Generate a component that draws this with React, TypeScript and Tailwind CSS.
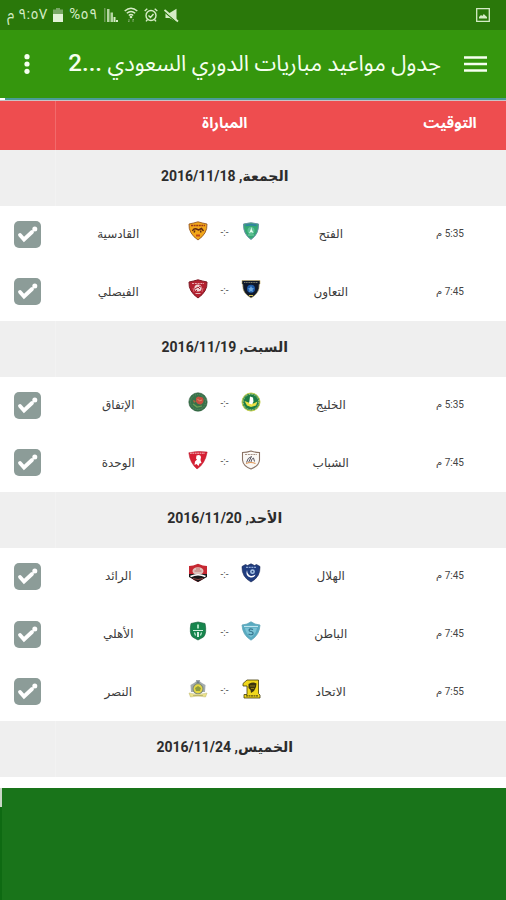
import { useState } from "react";
import type { ReactNode } from "react";

type CrestName =
  | "qadsiah" | "fateh" | "faisaly" | "taawoun" | "ettifaq" | "khaleej" | "wehda"
  | "shabab" | "raed" | "hilal" | "ahli" | "batin" | "nassr" | "ittihad";

type Match = { time: string; home: string; away: string; homeCrest: CrestName; awayCrest: CrestName };
type Day = { name: string; date: string; matches: Match[] };

const days: Day[] = [
  {
    name: "الجمعة", date: "2016/11/18",
    matches: [
      { time: "5:35", home: "الفتح", away: "القادسية", homeCrest: "fateh", awayCrest: "qadsiah" },
      { time: "7:45", home: "التعاون", away: "الفيصلي", homeCrest: "taawoun", awayCrest: "faisaly" },
    ],
  },
  {
    name: "السبت", date: "2016/11/19",
    matches: [
      { time: "5:35", home: "الخليج", away: "الإتفاق", homeCrest: "khaleej", awayCrest: "ettifaq" },
      { time: "7:45", home: "الشباب", away: "الوحدة", homeCrest: "shabab", awayCrest: "wehda" },
    ],
  },
  {
    name: "الأحد", date: "2016/11/20",
    matches: [
      { time: "7:45", home: "الهلال", away: "الرائد", homeCrest: "hilal", awayCrest: "raed" },
      { time: "7:45", home: "الباطن", away: "الأهلي", homeCrest: "batin", awayCrest: "ahli" },
      { time: "7:55", home: "الاتحاد", away: "النصر", homeCrest: "ittihad", awayCrest: "nassr" },
    ],
  },
  { name: "الخميس", date: "2016/11/24", matches: [] },
];

const wideShield = "M1 3 Q6 2 10 .8 Q14 2 19 3 Q19.6 12.5 10 19 Q.4 12.5 1 3Z";

const crests: Record<CrestName, ReactNode> = {
  qadsiah: (
    <>
      <path d={wideShield} fill="#f2a71a" stroke="#8a4a1c" strokeWidth=".8" />
      <path d="M3 4.500h14" stroke="#9c3a18" strokeWidth="1.500" strokeDasharray="2 .6" />
      <path d="M4.500 10q1-3 4-2l2 1 3-1.500 2 2.500M7 9.500l-1 2M12.500 9.500l.5 2" stroke="#5d2713" strokeWidth="1.400" fill="none" />
      <path d="M8 14.500h4" stroke="#c2461a" strokeWidth="2" />
    </>
  ),
  fateh: (
    <>
      <path d="M2.500 3 Q10 .5 17.500 3 Q18 13 10 18.500 Q2 13 2.500 3Z" fill="#35a873" stroke="#6a92a8" strokeWidth="1" />
      <path d="M4.500 4.500q5.500-1.500 11 0" stroke="#2f7ea8" strokeWidth="1.500" fill="none" />
      <circle cx="10" cy="9.500" r="3.500" fill="#5fc096" />
      <path d="M10.500 6l.3 2.500 1.700 3.500-2.500-1-2 1.500 1.500-3.500z" fill="#e6fff2" />
      <path d="M7 14h6" stroke="#7fd0ac" strokeWidth="1" />
    </>
  ),
  faisaly: (
    <>
      <path d={wideShield} fill="#b3202f" stroke="#7c1a25" strokeWidth="1" />
      <path d="M4 4.500h12" stroke="#e9a9ae" strokeWidth="1" strokeDasharray="2 .8" />
      <circle cx="10" cy="9" r="3.600" fill="#eed3d4" />
      <path d="M7 10l3-2 2 2M11 7l2 1M8 12l1-1" fill="none" stroke="#a31e2c" strokeWidth="1" />
      <path d="M5 9l1 4M15 9l-1 4" stroke="#da7a83" strokeWidth=".8" />
      <path d="M7.500 14.500h5" stroke="#e4b5b8" strokeWidth="1" />
    </>
  ),
  taawoun: (
    <>
      <path d="M1 1.500h18v3.200l-.8 1Q19 14 10 19 Q1 14 1.800 5.700L1 4.700Z" fill="#10192b" stroke="#c9b26a" strokeWidth=".6" />
      <path d="M3 3.500h14" stroke="#97977a" strokeWidth=".8" strokeDasharray="1.200 .5" />
      <circle cx="10" cy="9.800" r="4" fill="#1f5ca8" />
      <path d="M10 7l1 2 2 .4-1.500 1.400.4 2.200-1.900-1-1.900 1 .4-2.200L7 9.400 9 9z" fill="#6fa9de" />
      <path d="M8 16.500h4" stroke="#d4c050" strokeWidth="1" />
    </>
  ),
  ettifaq: (
    <>
      <circle cx="10" cy="10" r="9.200" fill="#39724a" stroke="#2b5a3a" strokeWidth=".6" />
      <circle cx="10" cy="10" r="7.500" fill="none" stroke="#5c9169" strokeWidth=".9" strokeDasharray="1 1" />
      <path d="M8 6q2-2.500 4-1 3-.5 3.500 2 .5 4-2.500 5.500-4 0-5-3z" fill="#c9503f" />
      <path d="M5 8l3 1-2 2" fill="#b5603f" />
      <path d="M9.500 7l2 2 2.500-1" stroke="#efaa8e" strokeWidth=".7" fill="none" />
      <path d="M5 12l4 3 5-1" stroke="#6fa256" strokeWidth="1.200" fill="none" />
    </>
  ),
  khaleej: (
    <>
      <circle cx="10" cy="10" r="9" fill="#1d7d45" stroke="#c5cf4c" strokeWidth="1" />
      <circle cx="10" cy="10" r="7.700" fill="none" stroke="#dfe8a0" strokeWidth=".8" strokeDasharray="1 .7" />
      <path d="M3.500 9l4 1.500 5 1 4-2-1.500 4-5 1.500-4-1.500z" fill="#ecdf45" />
      <path d="M9 4.500l3 1 .5 4-1.500 3-3-1 .5-3z" fill="#fff" />
    </>
  ),
  wehda: (
    <>
      <path d="M.8 2.800 Q10 .5 19.200 2 Q17 14 9 19 Q2 13 .8 2.800Z" fill="#d61f33" stroke="#b81428" strokeWidth=".5" />
      <path d="M2 3.200h15" stroke="#f3c2c6" strokeWidth="1" strokeDasharray="1.800 .6" />
      <path d="M8.500 5.500q4-1.500 4.500 1.500l-.5 3 1 3-2 .5-1 2.500-2-2-2 1 .5-3.500 2-2-1-1z" fill="#fff" />
    </>
  ),
  shabab: (
    <>
      <path d="M1.500 2.500 Q6 2.500 10 1 Q14 2.500 18.500 2.500 V10 Q18 16 10 19 Q2 16 1.500 10Z" fill="#faf8f5" stroke="#8a7264" strokeWidth="1.100" />
      <path d="M4 4.500h12" stroke="#a59085" strokeWidth="1" strokeDasharray="2 .8" />
      <path d="M5.500 12.500q1-5 5-6l-3 6M10 12q0-3 2.500-4l1 3.500" stroke="#55535f" strokeWidth="1" fill="none" />
      <path d="M5 13.500q5-2 9.500 0" stroke="#df9859" strokeWidth="1.100" fill="none" />
    </>
  ),
  raed: (
    <>
      <path d="M1 3 Q5 3 10 .8 Q15 3 19 3V13 Q14 17 10 19 Q5 17 1 13Z" fill="#c62832" />
      <path d="M1 11h18v3l-9 5-9-5z" fill="#191719" />
      <ellipse cx="10" cy="8" rx="5.500" ry="3.800" fill="#dfc2bc" />
      <path d="M6.500 8h7M8 6h4" stroke="#b3635d" strokeWidth=".8" />
      <path d="M2.500 13.500q7.500-3.500 15 0" stroke="#fff" strokeWidth="1.700" fill="none" />
      <path d="M5 15.500q5 2 10 0" stroke="#a8524e" strokeWidth=".8" fill="none" />
    </>
  ),
  hilal: (
    <>
      <path d="M1 3.500L4.500 1.500l2 1L10 .8l3.500 1.700 2-1L19 3.500Q19.500 14 10 19 Q.5 14 1 3.500Z" fill="#203d80" stroke="#142451" strokeWidth=".6" />
      <path d="M5 4.300h10" stroke="#a9c3e7" strokeWidth="1" strokeDasharray="2 .7" />
      <path d="M6 7q-2 6 3.500 7.500 4 .5 5-3-4 2.500-6.500.5Q6 10 6 7z" fill="#fff" />
      <circle cx="11.500" cy="8.700" r="2.400" fill="#a9c8ea" />
      <circle cx="11.500" cy="8.700" r=".9" fill="#25427d" />
    </>
  ),
  ahli: (
    <>
      <path d="M3 2.500L10 1l7 1.500Q19 12 15.500 16L10 19l-5.500-3Q1 12 3 2.500Z" fill="#16854d" stroke="#1b6741" strokeWidth=".7" />
      <path d="M9 3.500h2v4H9z" fill="#a9dfc0" />
      <path d="M5 9.500h10M6.500 11.500l1 3M13.500 11.500l-1 3" stroke="#d0f0de" strokeWidth="1.100" />
      <path d="M9 11h2v5H9z" fill="#d8eee1" />
    </>
  ),
  batin: (
    <>
      <path d="M1 4l5-1L10 .8 14 3l5 1Q18.500 14 10 19.200 Q1.500 14 1 4Z" fill="#58aac0" stroke="#5fa5b8" strokeWidth=".8" />
      <path d="M3 5.500h14" stroke="#c0e6ef" strokeWidth="1.200" />
      <path d="M4 7h12q-1 6-6 9.500Q5 13 4 7Z" fill="#7cc4d6" />
      <path d="M12 8.500q-3-1.500-4 .5 0 1.500 2 1.500 2.500.5 2 2.500-2 1.500-4.500 0" fill="none" stroke="#35758e" strokeWidth="1.200" />
    </>
  ),
  nassr: (
    <>
      <path d="M2.500 6l3.500-2 2-1.500V1h4v1.500L14 4l3.500 2-.5 7H3z" fill="#a3abae" />
      <path d="M8 4.500l2-3 2 3" fill="#6f7f8a" />
      <circle cx="10" cy="9.800" r="5" fill="#e5d743" stroke="#7d8a78" strokeWidth="1.100" />
      <path d="M7 9l3-2 3 2-1 3H8z" fill="#8c9a3d" />
      <path d="M1 14q9 3 18 0l-1.500 4q-7.500-2-15 0z" fill="#ebe28b" stroke="#bdb565" strokeWidth=".5" />
      <path d="M5 16.300q5 .8 10 0" stroke="#aaa35a" strokeWidth=".7" fill="none" />
    </>
  ),
  ittihad: (
    <>
      <path d="M2 4.500L6 1h11.500v13.500L19 16v3H3v-3.500h3V7H2z" fill="#f1d81c" stroke="#453e0a" strokeWidth=".8" />
      <path d="M7.500 5q5-2.500 8-.5l-.5 3.500-2 4-3 2-.5-3-2-2z" fill="#3b340f" />
      <path d="M9 7h5M10 9.500h3" stroke="#b5a01d" strokeWidth=".7" />
      <path d="M5 16.800h12" stroke="#5b5110" strokeWidth="1.200" strokeDasharray="2 .5" />
    </>
  ),
};

function Crest({ name }: { name: CrestName }) {
  return (
    <svg viewBox="0 0 20 20" className="size-5 shrink-0" aria-hidden="true">
      {crests[name]}
    </svg>
  );
}

function StatusBar() {
  return (
    <div dir="ltr" className="flex h-[30px] items-center justify-between bg-[#2a780a] pl-[7px] pr-4 text-[#d5ecc6]">
      <div className="flex items-center gap-[6px]">
        <span dir="rtl" className="pb-[2px] text-[15px] leading-[20px]">٩:٥٧ م</span>
        <svg viewBox="0 0 10 14" className="h-[14px] w-[10px]" aria-hidden="true">
          <path d="M3 0h4v1.500h3V14H0V1.500h3z" fill="#79a866" />
          <path d="M0 6h10v8H0z" fill="#e2f2d8" />
        </svg>
        <span dir="rtl" className="pb-[2px] text-[15px] leading-[20px]">٥٩%</span>
        <svg viewBox="0 0 14 14" className="h-[14px] w-[14px]" aria-hidden="true">
          <path d="M0 0h1.500v14H0z" fill="#6c9c56" />
          <path d="M3 1h2.500v13H3zM6.500 4.500H9V14H6.500z" fill="#b4d6a2" />
          <path d="M9.500 9h2v5h-2zM12 12h2v2h-2z" fill="#d5ecc6" />
        </svg>
        <svg viewBox="0 0 14 16" className="h-4 w-[14px]" fill="none" stroke="currentColor" strokeWidth="1.500" aria-hidden="true">
          <path d="M.7 4q6.300-5.500 12.600 0M2.800 6.300q4.200-3.600 8.400 0M4.800 8.500q2.200-1.800 4.400 0" />
          <circle cx="7" cy="10" r=".6" fill="currentColor" />
          <path d="M5 12v3M4 14l1 1M9 15v-3M10 13l-1-1" stroke="#7faa6d" strokeWidth="1" />
        </svg>
        <svg viewBox="0 0 14 14" className="size-[14px]" fill="none" stroke="currentColor" strokeWidth="1.400" aria-hidden="true">
          <circle cx="7" cy="7.500" r="5" />
          <path d="M.7 3L3.300.8M13.300 3L10.700.8M4.500 7.500l2 2 3-3.500M3.500 11.500L2 13.400M10.500 11.500l1.500 1.900" />
        </svg>
        <svg viewBox="0 0 15 15" className="size-[15px]" aria-hidden="true">
          <path d="M1.500 5h4L12.500.8v13L5.500 10h-4z" fill="currentColor" />
          <path d="M0 3.500l13 11" stroke="#2a780a" strokeWidth="1.300" />
          <path d="M.5 2l13.500 11.500" stroke="currentColor" strokeWidth="1.800" />
        </svg>
      </div>
      <svg viewBox="0 0 14 14" className="size-[14px]" aria-hidden="true">
        <path d="M.7.7h12.600v12.600H.7z" fill="none" stroke="currentColor" strokeWidth="1.300" />
        <path d="M3 10.500V9l2-2 1.300 1 1.500-2 1.500 1.500L11 9v1.500z" fill="currentColor" />
      </svg>
    </div>
  );
}

function AppBar() {
  return (
    <header className="flex h-[68px] items-center bg-[#35960d] px-[18px] text-[#f6fff0]">
      <button type="button" aria-label="القائمة" className="flex h-10 w-6 items-center justify-center">
        <svg viewBox="0 0 24 16" className="h-4 w-6 shrink-0" aria-hidden="true">
          <path d="M0 1.500h23M0 8h23M0 14.500h23" stroke="currentColor" strokeWidth="2.400" />
        </svg>
      </button>
      <h1 className="mr-[23px] min-w-0 flex-1 whitespace-nowrap pb-[2px] text-[22px] leading-[32px]">
        جدول مواعيد مباريات الدوري السعودي{" "}
        <span className="text-[24px] font-medium">...2</span>
      </h1>
      <button type="button" aria-label="المزيد" className="flex h-10 w-[18px] items-center justify-center">
        <svg viewBox="0 0 6 20" className="h-5 w-[6px]" fill="currentColor" aria-hidden="true">
          <circle cx="3" cy="2.700" r="2.600" />
          <circle cx="3" cy="10" r="2.600" />
          <circle cx="3" cy="17.300" r="2.600" />
        </svg>
      </button>
    </header>
  );
}

function Tick({ label }: { label: string }) {
  const [on, setOn] = useState(true);
  return (
    <label className="mx-auto grid size-[27px] place-items-center">
      <input
        type="checkbox"
        checked={on}
        onChange={() => setOn(!on)}
        aria-label={label}
        className="peer col-start-1 row-start-1 size-[27px] appearance-none rounded-[5px] bg-[#8c9c98]"
      />
      <svg viewBox="0 0 27 27" className="pointer-events-none invisible col-start-1 row-start-1 size-[27px] peer-checked:visible" aria-hidden="true">
        <path d="M6 14l4 4.500 8-7.500" fill="none" stroke="#fff" strokeWidth="3.800" strokeLinecap="round" />
        <circle cx="20.800" cy="8" r="2.500" fill="#fff" />
      </svg>
    </label>
  );
}

function Pairing({ match }: { match: Match }) {
  return (
    <div className="flex items-center px-[10px] text-[12px] leading-[18px] text-[#3c3c3c]">
      <span className="flex-1 text-center">{match.home}</span>
      <span className="flex w-[106px] items-center justify-center gap-[10px] pb-[6px]">
        <Crest name={match.homeCrest} />
        <span className="w-[13px] pt-[4px] text-center text-[10px] leading-[16px] text-[#555]">-:-</span>
        <Crest name={match.awayCrest} />
      </span>
      <span className="flex-1 text-center">{match.away}</span>
    </div>
  );
}

export default function App() {
  return (
    <div dir="rtl" lang="ar" className="flex min-h-screen flex-col bg-white font-['Roboto','Noto_Sans_Arabic',sans-serif]">
      <StatusBar />
      <AppBar />
      <div className="flex h-[3px] flex-row-reverse border-b border-[#c9c3c6] bg-[#4a9b98]">
        <div className="w-[5px] bg-white" />
      </div>
      <table className="w-full table-fixed border-collapse">
        <colgroup>
          <col className="w-[112px]" />
          <col />
          <col className="w-[55px]" />
        </colgroup>
        <thead>
          <tr className="h-[49px] bg-[#ee4d4f] text-[15px] leading-[20px] text-white">
            <th scope="col" className="pb-[6px] font-bold">التوقيت</th>
            <th scope="col" className="pb-[6px] font-bold">المباراة</th>
            <td className="border-r border-[#f26a6b]" />
          </tr>
        </thead>
        {days.map((day) => (
          <tbody key={day.date} className="font-['Roboto','DejaVu_Sans',sans-serif]">
            <tr className="h-[56px] bg-[#efefef]">
              <td />
              <th scope="rowgroup" className="pb-[4px] text-[14px] leading-[20px] font-bold text-[#2c2c2c]">
                {day.name}, {day.date}
              </th>
              <td className="border-r border-[#f2f2f2]" />
            </tr>
            {day.matches.map((match) => (
              <tr key={match.home} className="h-[58px] last:h-[57px]">
                <td className="pb-[2px] text-center text-[10px] leading-[16px] text-[#444]">{match.time} م</td>
                <td className="pb-[2px]"><Pairing match={match} /></td>
                <td className="pb-[2px]"><Tick label={`${match.home} - ${match.away}`} /></td>
              </tr>
            ))}
          </tbody>
        ))}
      </table>
      <div className="h-[11px] bg-white" />
      <footer dir="ltr" className="flex-1 border-l-2 border-[#0e6a12] bg-[#19741a]">
        <div className="-ml-[2px] h-[19px] w-[2px] bg-[#c9d6c7]" />
      </footer>
    </div>
  );
}
